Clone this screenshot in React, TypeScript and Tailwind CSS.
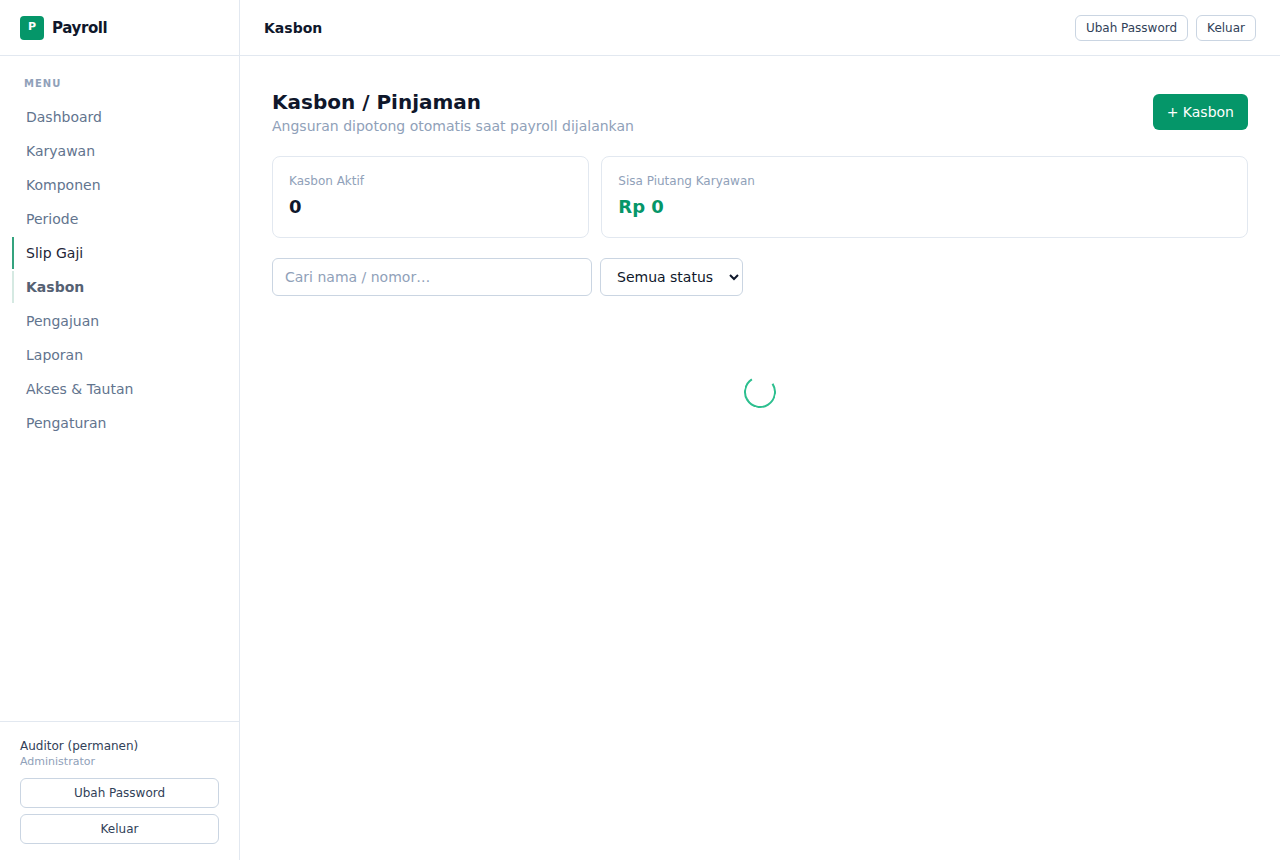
// src/App.tsx
import React, { useState } from 'react';

interface MenuItem {
  label: string;
  href: string;
}

const MENU: MenuItem[] = [
  { label: 'Dashboard', href: '#dashboard' },
  { label: 'Karyawan', href: '#karyawan' },
  { label: 'Komponen', href: '#komponen' },
  { label: 'Periode', href: '#periode' },
  { label: 'Slip Gaji', href: '#slip-gaji' },
  { label: 'Kasbon', href: '#kasbon' },
  { label: 'Pengajuan', href: '#pengajuan' },
  { label: 'Laporan', href: '#laporan' },
  { label: 'Akses & Tautan', href: '#akses' },
  { label: 'Pengaturan', href: '#pengaturan' },
];

const LINK_STYLES: Record<string, string> = {
  'Slip Gaji': 'border-[#34a37e] text-[#1e2637]',
  Kasbon: 'border-[#d5e9e2] text-[#556173] font-semibold',
};

function Sidebar() {
  return (
    <aside className="sticky top-0 flex h-screen w-60 shrink-0 flex-col border-r border-slate-200">
      <div className="flex h-14 shrink-0 items-center gap-2 border-b border-slate-200 px-5">
        <div className="flex size-6 items-center justify-center rounded bg-[#059669] text-[11px] leading-4 font-bold text-white">
          <span className="pb-px">P</span>
        </div>
        <span className="text-[15px] leading-6 font-bold tracking-tight text-slate-900">Payroll</span>
      </div>

      <nav className="flex-1 overflow-y-auto px-3 py-5" aria-label="Menu">
        <p className="mb-2.5 px-3 text-[10px] leading-[15px] font-semibold tracking-widest text-slate-400">MENU</p>
        <ul className="flex flex-col gap-0.5">
          {MENU.map(item => (
            <li key={item.label}>
              <a
                href={item.href}
                className={`block border-l-2 px-3 py-1.5 text-sm ${LINK_STYLES[item.label] ?? 'border-transparent text-slate-500'}`}
              >
                {item.label}
              </a>
            </li>
          ))}
        </ul>
      </nav>

      <div className="border-t border-slate-200 px-5 py-4">
        <p className="text-xs text-slate-700">Auditor (permanen)</p>
        <p className="text-[11px] leading-4 text-slate-400">Administrator</p>
        <div className="mt-2 flex flex-col gap-1.5">
          <button className="rounded-md border border-slate-300 py-1.5 text-xs text-slate-700 hover:bg-slate-50">Ubah Password</button>
          <button className="rounded-md border border-slate-300 py-1.5 text-xs text-slate-700 hover:bg-slate-50">Keluar</button>
        </div>
      </div>
    </aside>
  );
}

function Topbar() {
  return (
    <header className="flex h-14 items-center justify-between border-b border-slate-200 px-6">
      <span className="text-sm font-semibold text-slate-900">Kasbon</span>
      <div className="flex gap-2">
        <button className="rounded-md border border-slate-300 px-2.5 py-1 text-xs text-slate-700 hover:bg-slate-50">Ubah Password</button>
        <button className="rounded-md border border-slate-300 px-2.5 py-1 text-xs text-slate-700 hover:bg-slate-50">Keluar</button>
      </div>
    </header>
  );
}

export default function App() {
  const [search, setSearch] = useState('');
  const [status, setStatus] = useState('');

  return (
    <div className="flex min-h-screen bg-white font-['DejaVu_Sans',sans-serif]">
      <Sidebar />
      <div className="min-w-0 flex-1">
        <Topbar />
        <main className="p-8">
          <div className="mb-5 flex items-center justify-between">
            <div>
              <h1 className="text-xl font-semibold text-slate-900">Kasbon / Pinjaman</h1>
              <p className="text-sm text-slate-400">Angsuran dipotong otomatis saat payroll dijalankan</p>
            </div>
            <button className="rounded-md bg-[#059669] px-3.5 py-2 text-sm text-white hover:bg-[#047857]">+ Kasbon</button>
          </div>

          <div className="mb-5 grid grid-cols-3 gap-3">
            <div className="rounded-lg border border-slate-200 p-4">
              <p className="text-xs text-slate-400">Kasbon Aktif</p>
              <p className="mt-1 text-lg font-semibold text-slate-900">0</p>
            </div>
            <div className="col-span-2 rounded-lg border border-slate-200 p-4">
              <p className="text-xs text-slate-400">Sisa Piutang Karyawan</p>
              <p className="mt-1 text-lg font-semibold text-[#059669]">Rp 0</p>
            </div>
          </div>

          <div className="flex gap-2">
            <input
              type="text"
              aria-label="Cari nama / nomor"
              placeholder="Cari nama / nomor…"
              value={search}
              onChange={e => setSearch(e.target.value)}
              className="w-80 rounded-md border border-slate-300 px-3 py-2 text-sm text-slate-900 placeholder:text-slate-400"
            />
            <select
              aria-label="Status"
              value={status}
              onChange={e => setStatus(e.target.value)}
              className="rounded-md border border-slate-300 bg-white px-3 py-2 text-sm text-slate-900"
            >
              <option value="">Semua status</option>
              <option value="aktif">Aktif</option>
              <option value="lunas">Lunas</option>
            </select>
          </div>

          <div className="flex justify-center py-20" role="status" aria-label="Memuat">
            <div className="size-8 rotate-12 rounded-full border-2 border-[#2dbf8f] border-t-transparent" />
          </div>
        </main>
      </div>
    </div>
  );
}
